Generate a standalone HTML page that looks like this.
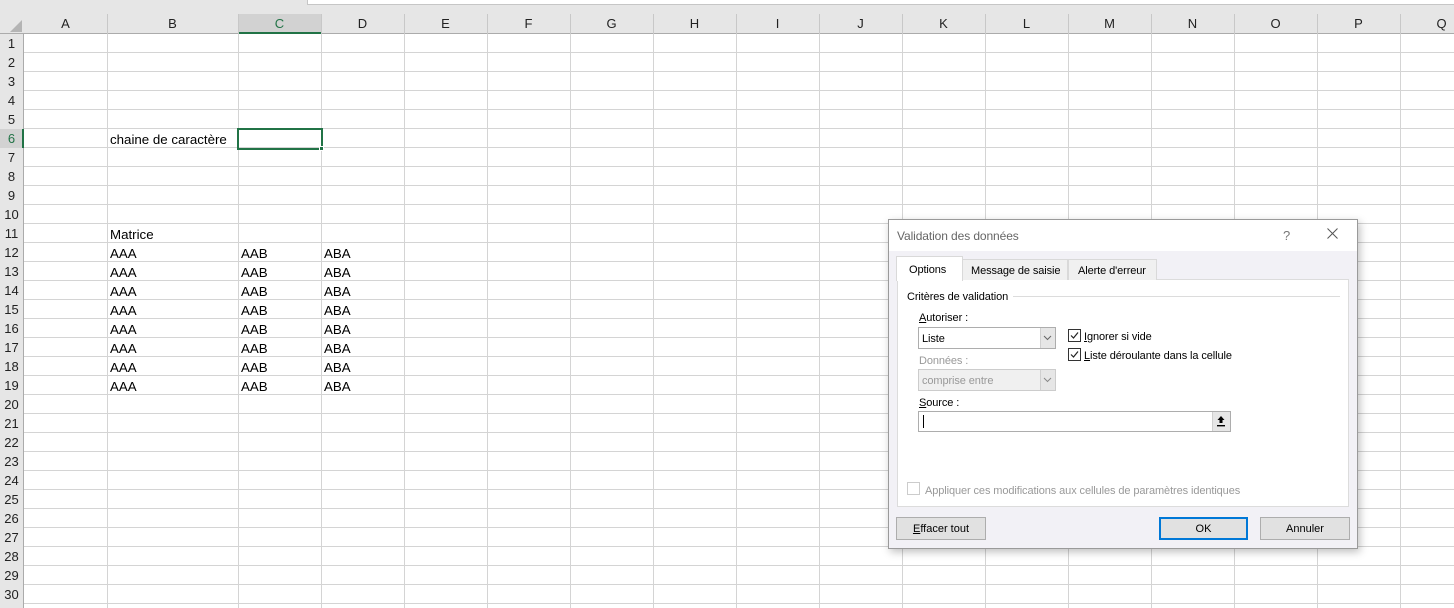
<!DOCTYPE html>
<html><head><meta charset="utf-8">
<style>
*{margin:0;padding:0;box-sizing:border-box}
body{width:1454px;height:608px;overflow:hidden;background:#fff;font-family:"Liberation Sans",sans-serif;position:relative}
.a{position:absolute}
#top{left:0;top:0;width:1454px;height:14px;background:#e6e6e6}
#topbox{left:307px;top:0;width:1147px;height:5px;background:#fff;border-left:1px solid #c6c6c6;border-bottom:1px solid #c6c6c6}
#hdr{left:0;top:14px;width:1454px;height:20px;background:#e6e6e6;border-bottom:1px solid #ababab}
#rh{left:0;top:34px;width:24px;height:574px;background:#e6e6e6;border-right:1px solid #ababab}
#grid{left:24px;top:34px;width:1430px;height:574px;background:repeating-linear-gradient(to bottom,transparent 0,transparent 18px,#d4d4d4 18px,#d4d4d4 19px)}
.vl{position:absolute;top:34px;width:1px;height:574px;background:#d4d4d4}
.hv{position:absolute;top:14px;width:1px;height:20px;background:#c8c8c8}
.ch{position:absolute;top:14px;height:20px;line-height:20px;text-align:center;font-size:13px;color:#222}
.rn{position:absolute;left:0;width:23px;height:19px;line-height:19px;text-align:center;font-size:13px;color:#222}
.t{position:absolute;font-size:13.3px;color:#000;line-height:19px;height:19px}
.d{font-family:"Liberation Sans",sans-serif;font-size:11px;color:#000;position:absolute;white-space:nowrap;transform:translateY(1px);letter-spacing:-0.1px}
.cb{position:absolute;width:13px;height:13px;border:1px solid #333;background:#fff}
.btn{position:absolute;height:23px;border:1px solid #adadad;background:#e1e1e1;font-size:11px;text-align:center;line-height:23px}
</style></head><body>
<div class="a" id="top"></div><div class="a" id="topbox"></div>
<div class="a" id="hdr"></div>
<div class="a" style="left:238px;top:14px;width:83px;height:20px;background:#d2d2d2;border-bottom:2px solid #217346"></div>
<svg class="a" style="left:8px;top:20px" width="14" height="12"><polygon points="14,0 14,12 2,12" fill="#b4b4b4"/></svg>
<div class="a" id="rh"></div>
<div class="a" style="left:0;top:129px;width:24px;height:19px;background:#d2d2d2;border-right:2px solid #217346"></div>
<div class="a" id="grid"></div>

<div class="hv" style="left:107px"></div><div class="hv" style="left:238px"></div><div class="hv" style="left:321px"></div><div class="hv" style="left:404px"></div><div class="hv" style="left:487px"></div><div class="hv" style="left:570px"></div><div class="hv" style="left:653px"></div><div class="hv" style="left:736px"></div><div class="hv" style="left:819px"></div><div class="hv" style="left:902px"></div><div class="hv" style="left:985px"></div><div class="hv" style="left:1068px"></div><div class="hv" style="left:1151px"></div><div class="hv" style="left:1234px"></div><div class="hv" style="left:1317px"></div><div class="hv" style="left:1400px"></div>
<div class="vl" style="left:107px"></div><div class="vl" style="left:238px"></div><div class="vl" style="left:321px"></div><div class="vl" style="left:404px"></div><div class="vl" style="left:487px"></div><div class="vl" style="left:570px"></div><div class="vl" style="left:653px"></div><div class="vl" style="left:736px"></div><div class="vl" style="left:819px"></div><div class="vl" style="left:902px"></div><div class="vl" style="left:985px"></div><div class="vl" style="left:1068px"></div><div class="vl" style="left:1151px"></div><div class="vl" style="left:1234px"></div><div class="vl" style="left:1317px"></div><div class="vl" style="left:1400px"></div>

<div class="ch" style="left:24px;width:83px">A</div><div class="ch" style="left:107px;width:131px">B</div><div class="ch" style="left:238px;width:83px;color:#217346">C</div><div class="ch" style="left:321px;width:83px">D</div><div class="ch" style="left:404px;width:83px">E</div><div class="ch" style="left:487px;width:83px">F</div><div class="ch" style="left:570px;width:83px">G</div><div class="ch" style="left:653px;width:83px">H</div><div class="ch" style="left:736px;width:83px">I</div><div class="ch" style="left:819px;width:83px">J</div><div class="ch" style="left:902px;width:83px">K</div><div class="ch" style="left:985px;width:83px">L</div><div class="ch" style="left:1068px;width:83px">M</div><div class="ch" style="left:1151px;width:83px">N</div><div class="ch" style="left:1234px;width:83px">O</div><div class="ch" style="left:1317px;width:83px">P</div><div class="ch" style="left:1400px;width:83px">Q</div>

<div class="rn" style="top:34px">1</div><div class="rn" style="top:53px">2</div><div class="rn" style="top:72px">3</div><div class="rn" style="top:91px">4</div><div class="rn" style="top:110px">5</div><div class="rn" style="top:129px;color:#217346">6</div><div class="rn" style="top:148px">7</div><div class="rn" style="top:167px">8</div><div class="rn" style="top:186px">9</div><div class="rn" style="top:205px">10</div><div class="rn" style="top:224px">11</div><div class="rn" style="top:243px">12</div><div class="rn" style="top:262px">13</div><div class="rn" style="top:281px">14</div><div class="rn" style="top:300px">15</div><div class="rn" style="top:319px">16</div><div class="rn" style="top:338px">17</div><div class="rn" style="top:357px">18</div><div class="rn" style="top:376px">19</div><div class="rn" style="top:395px">20</div><div class="rn" style="top:414px">21</div><div class="rn" style="top:433px">22</div><div class="rn" style="top:452px">23</div><div class="rn" style="top:471px">24</div><div class="rn" style="top:490px">25</div><div class="rn" style="top:509px">26</div><div class="rn" style="top:528px">27</div><div class="rn" style="top:547px">28</div><div class="rn" style="top:566px">29</div><div class="rn" style="top:585px">30</div>

<div class="t" style="left:110px;top:130px">chaine de caractère</div>
<div class="a" style="left:237px;top:128px;width:86px;height:22px;border:2px solid #217346"></div>
<div class="a" style="left:319px;top:146px;width:5px;height:5px;background:#217346;border:1px solid #fff"></div>
<div class="t" style="left:110px;top:225px">Matrice</div>
<div class="t" style="left:110px;top:244px">AAA</div><div class="t" style="left:241px;top:244px">AAB</div><div class="t" style="left:324px;top:244px">ABA</div>
<div class="t" style="left:110px;top:263px">AAA</div><div class="t" style="left:241px;top:263px">AAB</div><div class="t" style="left:324px;top:263px">ABA</div>
<div class="t" style="left:110px;top:282px">AAA</div><div class="t" style="left:241px;top:282px">AAB</div><div class="t" style="left:324px;top:282px">ABA</div>
<div class="t" style="left:110px;top:301px">AAA</div><div class="t" style="left:241px;top:301px">AAB</div><div class="t" style="left:324px;top:301px">ABA</div>
<div class="t" style="left:110px;top:320px">AAA</div><div class="t" style="left:241px;top:320px">AAB</div><div class="t" style="left:324px;top:320px">ABA</div>
<div class="t" style="left:110px;top:339px">AAA</div><div class="t" style="left:241px;top:339px">AAB</div><div class="t" style="left:324px;top:339px">ABA</div>
<div class="t" style="left:110px;top:358px">AAA</div><div class="t" style="left:241px;top:358px">AAB</div><div class="t" style="left:324px;top:358px">ABA</div>
<div class="t" style="left:110px;top:377px">AAA</div><div class="t" style="left:241px;top:377px">AAB</div><div class="t" style="left:324px;top:377px">ABA</div>

<!-- dialog -->
<div class="a" style="left:888px;top:219px;width:470px;height:330px;background:#f2f1f6;border:1px solid #9a9a9a;box-shadow:2px 3px 8px rgba(0,0,0,.25)"></div>
<div class="a" style="left:889px;top:220px;width:468px;height:31px;background:#fff"></div>
<div class="d" style="left:897px;top:228px;font-size:12px;color:#666">Validation des données</div>
<div class="d" style="left:1283px;top:227px;font-size:13px;color:#777">?</div>
<svg class="a" style="left:1327px;top:228px" width="11" height="11"><path d="M0.5 0.5L10.5 10.5M10.5 0.5L0.5 10.5" stroke="#555" stroke-width="1"/></svg>

<div class="a" style="left:897px;top:279px;width:452px;height:228px;background:#fff;border:1px solid #dcdcdc"></div>
<div class="a" style="left:962px;top:259px;width:106px;height:21px;background:#f0f0f0;border:1px solid #d9d9d9;border-bottom:none"></div>
<div class="a" style="left:1068px;top:259px;width:89px;height:21px;background:#f0f0f0;border:1px solid #d9d9d9;border-bottom:none"></div>
<div class="a" style="left:896px;top:256px;width:67px;height:25px;background:#fff;border:1px solid #d9d9d9;border-bottom:none"></div>
<div class="d" style="left:909px;top:263px">Options</div>
<div class="d" style="left:971px;top:264px">Message de saisie</div>
<div class="d" style="left:1078px;top:264px">Alerte d'erreur</div>

<div class="d" style="left:907px;top:290px">Critères de validation</div>
<div class="a" style="left:1013px;top:296px;width:327px;height:1px;background:#dcdcdc"></div>
<div class="d" style="left:919px;top:311px"><u>A</u>utoriser :</div>
<div class="a" style="left:918px;top:327px;width:138px;height:22px;border:1px solid #adadad;background:#fff"></div>
<div class="a" style="left:1040px;top:328px;width:15px;height:20px;background:#e6e6e6;border-left:1px solid #cfcfcf"></div>
<svg class="a" style="left:1043px;top:335px" width="9" height="6"><path d="M1 1L4.5 4.5L8 1" stroke="#666" fill="none"/></svg>
<div class="d" style="left:922px;top:332px">Liste</div>
<div class="d" style="left:919px;top:354px;color:#999">Données :</div>
<div class="a" style="left:918px;top:369px;width:138px;height:22px;border:1px solid #cccccc;background:#f0f0f0"></div>
<div class="a" style="left:1040px;top:370px;width:15px;height:20px;background:#e6e6e6;border-left:1px solid #cfcfcf"></div>
<svg class="a" style="left:1043px;top:377px" width="9" height="6"><path d="M1 1L4.5 4.5L8 1" stroke="#888" fill="none"/></svg>
<div class="d" style="left:922px;top:374px;color:#999">comprise entre</div>

<div class="cb" style="left:1068px;top:329px"></div>
<svg class="a" style="left:1069px;top:330px" width="11" height="11"><path d="M2 5.5L4.5 8L9 2.5" stroke="#222" fill="none" stroke-width="1.2"/></svg>
<div class="d" style="left:1084px;top:330px"><u>I</u>gnorer si vide</div>
<div class="cb" style="left:1068px;top:348px"></div>
<svg class="a" style="left:1069px;top:349px" width="11" height="11"><path d="M2 5.5L4.5 8L9 2.5" stroke="#222" fill="none" stroke-width="1.2"/></svg>
<div class="d" style="left:1084px;top:349px"><u>L</u>iste déroulante dans la cellule</div>

<div class="d" style="left:919px;top:396px"><u>S</u>ource :</div>
<div class="a" style="left:918px;top:411px;width:313px;height:21px;border:1px solid #adadad;background:#fff"></div>
<div class="a" style="left:923px;top:415px;width:1px;height:13px;background:#000"></div>
<div class="a" style="left:1212px;top:412px;width:18px;height:19px;background:#e6e6e6;border-left:1px solid #cfcfcf"></div>
<svg class="a" style="left:1216px;top:415px" width="10" height="12"><path d="M5 1L1.5 5H3.5V8H6.5V5H8.5Z" fill="#000"/><rect x="1" y="10" width="8" height="1.4" fill="#000"/></svg>

<div class="cb" style="left:907px;top:482px;border-color:#ccc"></div>
<div class="d" style="left:925px;top:484px;color:#999">Appliquer ces modifications aux cellules de paramètres identiques</div>

<div class="btn" style="left:896px;top:517px;width:90px"><u>E</u>ffacer tout</div>
<div class="btn" style="left:1159px;top:517px;width:89px;border:1px solid #0078d7;box-shadow:inset 0 0 0 1px #0078d7">OK</div>
<div class="btn" style="left:1260px;top:517px;width:90px">Annuler</div>
</body></html>
